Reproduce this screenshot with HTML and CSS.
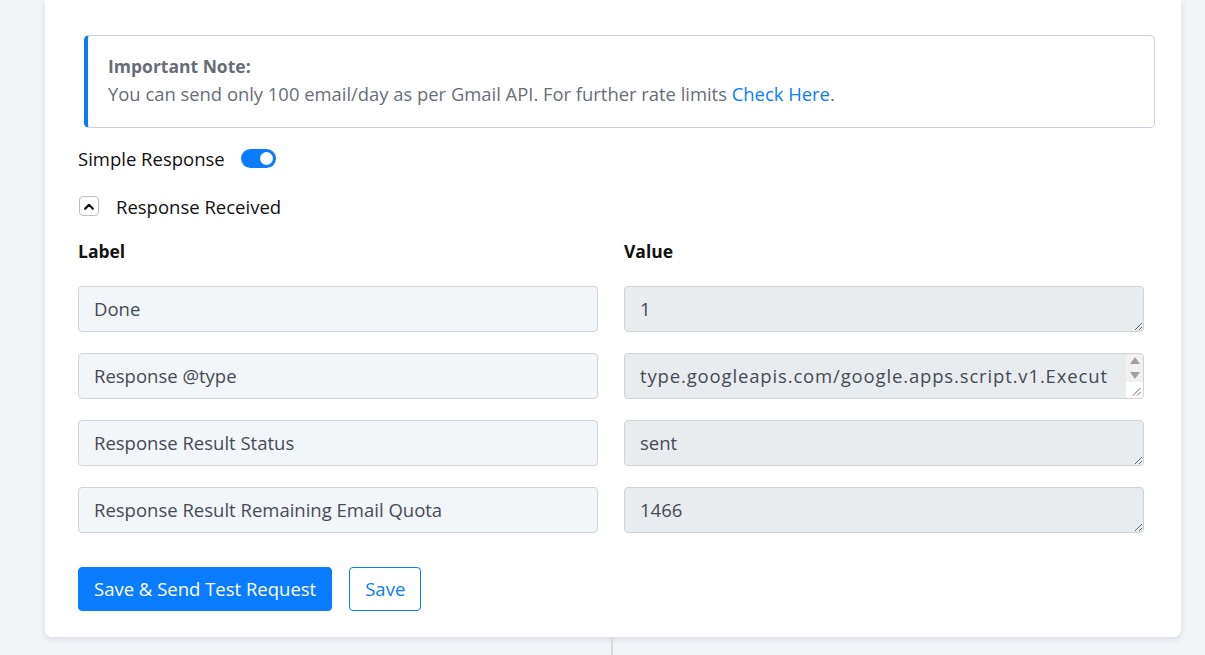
FILE: index.html
```html
<!DOCTYPE html>
<html lang="en">
<head>
<meta charset="utf-8">
<title>Gmail step – response</title>
<link rel="stylesheet" href="styles.css">
</head>
<body>
<main class="page">
  <section class="card">
    <div class="note">
      <p class="note-title">Important Note:</p>
      <p class="note-text">You can send only 100 email/day as per Gmail API. For further rate limits <a href="#" class="link">Check Here</a>.</p>
    </div>

    <div class="switch-row">
      <span>Simple Response</span>
      <span class="switch" role="switch" aria-checked="true"><span class="knob"></span></span>
    </div>

    <div class="collapse-row">
      <button class="chev" type="button" aria-label="Collapse">
        <svg width="10" height="7" viewBox="0 0 10 7"><path d="M1.2 5.6 L5 1.8 L8.8 5.6" fill="none" stroke="#111" stroke-width="2.2" stroke-linecap="round" stroke-linejoin="round"/></svg>
      </button>
      <span>Response Received</span>
    </div>

    <div class="grid">
      <div class="head">Label</div>
      <div class="head">Value</div>

      <input class="field" type="text" value="Done" readonly>
      <textarea class="area" readonly>1</textarea>

      <input class="field" type="text" value="Response @type" readonly>
      <div class="area-box">
        <textarea class="area-inner" readonly>type.googleapis.com/google.apps.script.v1.ExecutionResponse</textarea>
        <div class="vscroll" aria-hidden="true">
          <div class="track">
            <svg width="10" height="7" viewBox="0 0 10 7"><path d="M5 0 L10 7 L0 7 Z" fill="#a0a0a0"/></svg>
            <svg width="10" height="7" viewBox="0 0 10 7"><path d="M0 0 L10 0 L5 7 Z" fill="#a0a0a0"/></svg>
          </div>
          <div class="corner">
            <svg width="9" height="9" viewBox="0 0 9 9"><path d="M8.5 1 L1 8.5 M8.5 5 L5 8.5" stroke="#6b6b6b" stroke-width="1" fill="none"/></svg>
          </div>
        </div>
      </div>

      <input class="field" type="text" value="Response Result Status" readonly>
      <textarea class="area" readonly>sent</textarea>

      <input class="field" type="text" value="Response Result Remaining Email Quota" readonly>
      <textarea class="area" readonly>1466</textarea>
    </div>

    <div class="actions">
      <button class="btn btn-primary" type="button">Save &amp; Send Test Request</button>
      <button class="btn btn-outline" type="button">Save</button>
    </div>
  </section>
  <div class="connector"></div>
</main>
</body>
</html>
```

FILE: styles.css
```css
* { box-sizing: border-box; }

html, body {
  margin: 0;
  background: #f2f5f8;
  font-family: "Open Sans", "Noto Sans", sans-serif;
  color: #111;
}

.page {
  padding-left: 45px;
  width: 1181px;
}

.card {
  background: #fff;
  border-radius: 0 0 7px 7px;
  box-shadow: 0 2px 6px rgba(40, 50, 70, 0.14);
  padding: 35px 37px 26px 33px;
  height: 637px;
}

.note {
  margin: 0 -11px 0 6px;
  border: 1px solid #c9d0e0;
  border-left: 4px solid #0a7cff;
  border-radius: 5px;
  padding: 17px 20px 20px 20px;
  color: #686e78;
  font-size: 18.4px;
}

.note p { margin: 0; line-height: 27px; }
.note-title { font-weight: 700; font-size: 17.5px; }
.link { color: #0a7cff; text-decoration: none; }

.switch-row {
  display: flex;
  align-items: center;
  gap: 16px;
  margin-top: 17px;
  height: 26px;
  font-size: 18.5px;
}

.switch {
  width: 35px;
  height: 19px;
  border-radius: 10px;
  background: #0a7cff;
  position: relative;
  display: inline-block;
}

.knob {
  position: absolute;
  right: 3px;
  top: 3px;
  width: 13px;
  height: 13px;
  border-radius: 50%;
  background: #fff;
}

.collapse-row {
  display: flex;
  align-items: center;
  gap: 17px;
  margin-top: 22px;
  height: 26px;
  font-size: 18.5px;
  padding-left: 1px;
}

.chev {
  width: 20px;
  height: 20px;
  border: 1px solid #b9bec6;
  border-radius: 4px;
  background: #fff;
  padding: 0;
  display: flex;
  align-items: center;
  justify-content: center;
}

.grid {
  display: grid;
  grid-template-columns: 520px 520px;
  column-gap: 26px;
  row-gap: 21px;
  margin-top: 20px;
}

.head {
  font-weight: 700;
  font-size: 17.5px;
  line-height: 24px;
  margin-bottom: 2px;
}

.field, .area, .area-inner {
  font-family: inherit;
  font-size: 18.5px;
  color: #454b54;
  margin: 0;
  outline: none;
}

.field, .area {
  height: 46px;
  width: 520px;
  border-radius: 4px;
  padding: 0 15px 2px;
  display: block;
}

.field {
  background: #f3f6f9;
  border: 1px solid #cfd4dc;
}

.area {
  background: #e9ecef;
  border: 1px solid #ced3da;
  padding-top: 10px;
  line-height: 24px;
  resize: vertical;
  overflow: hidden;
}

/* long value: the box holds the text and a scroll column side by side */
.area-box {
  display: flex;
  align-items: flex-start;
  height: 46px;
  width: 520px;
  background: #e9ecef;
  border: 1px solid #ced3da;
  border-radius: 4px;
  overflow: hidden;
}

.area-inner {
  flex: 1;
  min-width: 0;
  height: 37px;
  border: 0;
  background: transparent;
  padding: 10px 15px 0 15px;
  line-height: 24px;
  letter-spacing: 0.85px;
  resize: none;
  overflow: hidden;
  word-break: break-all;
}

.vscroll {
  width: 17px;
  height: 100%;
  display: flex;
  flex-direction: column;
}

.track {
  flex: 1;
  background: #f1f1f1;
  display: flex;
  flex-direction: column;
  align-items: center;
  justify-content: space-between;
  padding: 3px 0 3px;
}

.corner {
  height: 16px;
  background: #fff;
  display: flex;
  align-items: flex-end;
  justify-content: flex-end;
  padding: 0 2px 2px 0;
}

.actions {
  display: flex;
  gap: 17px;
  margin-top: 34px;
}

.btn {
  height: 44px;
  border-radius: 4px;
  font-family: inherit;
  font-size: 18.5px;
  padding: 0 15px 2px;
}

.btn-primary {
  background: #0a7cff;
  border: 1px solid #0a7cff;
  color: #fff;
}

.btn-outline {
  background: #fff;
  border: 1px solid #0a7cff;
  color: #0a7cff;
}

.connector {
  width: 2px;
  height: 18px;
  background: #d6dade;
  margin-left: 566px;
}
```
